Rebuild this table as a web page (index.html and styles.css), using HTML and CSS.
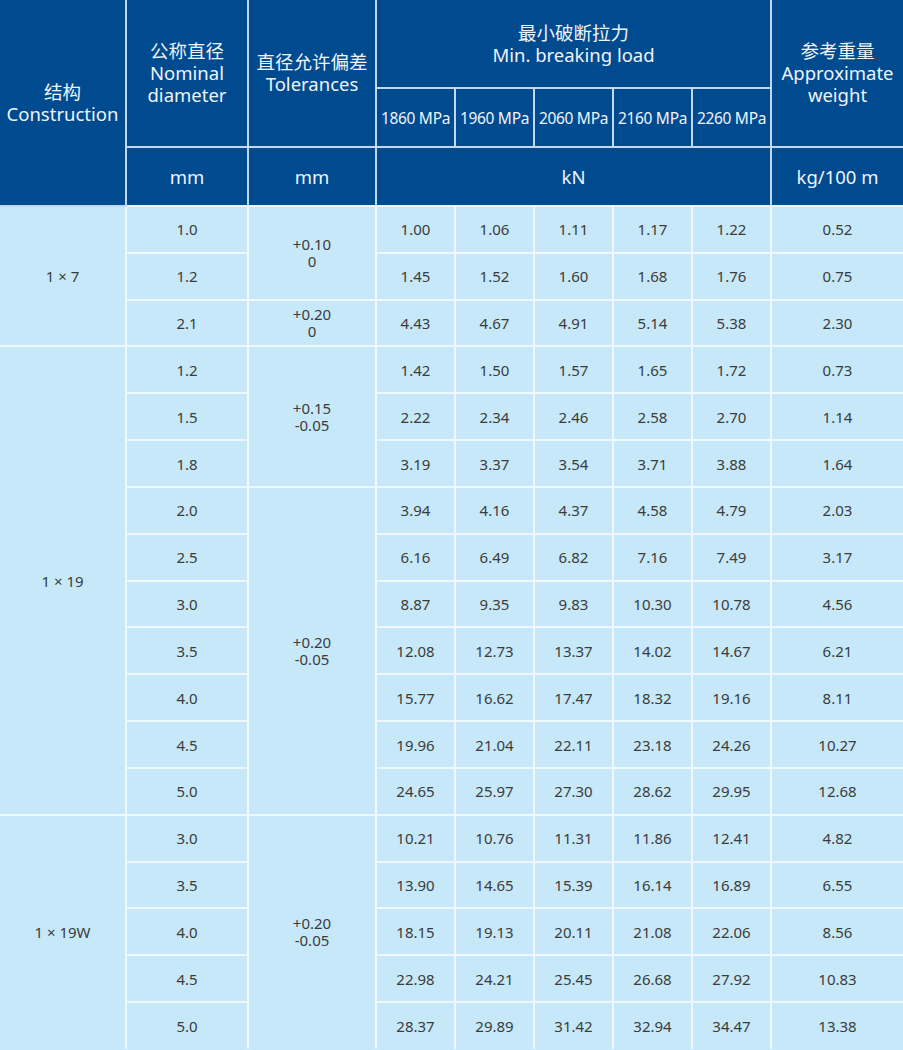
FILE: index.html
```html
<!DOCTYPE html>
<html>
<head>
<meta charset="utf-8">
<link rel="stylesheet" href="styles.css">
</head>
<body>
<table class="spec">
<colgroup>
<col class="c-con"><col class="c-nom"><col class="c-tol">
<col class="c-mpa"><col class="c-mpa"><col class="c-mpa"><col class="c-mpa"><col class="c-mpa">
<col class="c-wt">
</colgroup>
<thead>
<tr class="h1">
<th rowspan="3" class="nob-top nob-left">结构<br>Construction</th>
<th rowspan="2" class="nob-top">公称直径<br>Nominal<br>diameter</th>
<th rowspan="2" class="nob-top">直径允许偏差<br>Tolerances</th>
<th colspan="5" class="nob-top">最小破断拉力<br>Min. breaking load</th>
<th rowspan="2" class="nob-top nob-right">参考重量<br>Approximate<br>weight</th>
</tr>
<tr class="h2">
<th class="mpa">1860 MPa</th><th class="mpa">1960 MPa</th><th class="mpa">2060 MPa</th><th class="mpa">2160 MPa</th><th class="mpa">2260 MPa</th>
</tr>
<tr class="h3">
<th>mm</th><th>mm</th><th colspan="5">kN</th><th class="nob-right">kg/100 m</th>
</tr>
</thead>
<tbody>
<tr><td rowspan="3" class="nob-left">1 × 7</td><td>1.0</td><td rowspan="2" class="tol">+0.10<br>0</td><td>1.00</td><td>1.06</td><td>1.11</td><td>1.17</td><td>1.22</td><td class="nob-right">0.52</td></tr>
<tr><td>1.2</td><td>1.45</td><td>1.52</td><td>1.60</td><td>1.68</td><td>1.76</td><td class="nob-right">0.75</td></tr>
<tr><td>2.1</td><td class="tol">+0.20<br>0</td><td>4.43</td><td>4.67</td><td>4.91</td><td>5.14</td><td>5.38</td><td class="nob-right">2.30</td></tr>

<tr><td rowspan="10" class="nob-left">1 × 19</td><td>1.2</td><td rowspan="3" class="tol">+0.15<br>-0.05</td><td>1.42</td><td>1.50</td><td>1.57</td><td>1.65</td><td>1.72</td><td class="nob-right">0.73</td></tr>
<tr><td>1.5</td><td>2.22</td><td>2.34</td><td>2.46</td><td>2.58</td><td>2.70</td><td class="nob-right">1.14</td></tr>
<tr><td>1.8</td><td>3.19</td><td>3.37</td><td>3.54</td><td>3.71</td><td>3.88</td><td class="nob-right">1.64</td></tr>
<tr><td>2.0</td><td rowspan="7" class="tol">+0.20<br>-0.05</td><td>3.94</td><td>4.16</td><td>4.37</td><td>4.58</td><td>4.79</td><td class="nob-right">2.03</td></tr>
<tr><td>2.5</td><td>6.16</td><td>6.49</td><td>6.82</td><td>7.16</td><td>7.49</td><td class="nob-right">3.17</td></tr>
<tr><td>3.0</td><td>8.87</td><td>9.35</td><td>9.83</td><td>10.30</td><td>10.78</td><td class="nob-right">4.56</td></tr>
<tr><td>3.5</td><td>12.08</td><td>12.73</td><td>13.37</td><td>14.02</td><td>14.67</td><td class="nob-right">6.21</td></tr>
<tr><td>4.0</td><td>15.77</td><td>16.62</td><td>17.47</td><td>18.32</td><td>19.16</td><td class="nob-right">8.11</td></tr>
<tr><td>4.5</td><td>19.96</td><td>21.04</td><td>22.11</td><td>23.18</td><td>24.26</td><td class="nob-right">10.27</td></tr>
<tr><td>5.0</td><td>24.65</td><td>25.97</td><td>27.30</td><td>28.62</td><td>29.95</td><td class="nob-right">12.68</td></tr>

<tr><td rowspan="5" class="nob-left nob-bottom">1 × 19W</td><td>3.0</td><td rowspan="5" class="tol nob-bottom">+0.20<br>-0.05</td><td>10.21</td><td>10.76</td><td>11.31</td><td>11.86</td><td>12.41</td><td class="nob-right">4.82</td></tr>
<tr><td>3.5</td><td>13.90</td><td>14.65</td><td>15.39</td><td>16.14</td><td>16.89</td><td class="nob-right">6.55</td></tr>
<tr><td>4.0</td><td>18.15</td><td>19.13</td><td>20.11</td><td>21.08</td><td>22.06</td><td class="nob-right">8.56</td></tr>
<tr><td>4.5</td><td>22.98</td><td>24.21</td><td>25.45</td><td>26.68</td><td>27.92</td><td class="nob-right">10.83</td></tr>
<tr class="last"><td>5.0</td><td>28.37</td><td>29.89</td><td>31.42</td><td>32.94</td><td>34.47</td><td class="nob-right">13.38</td></tr>
</tbody>
</table>
</body>
</html>
```

FILE: styles.css
```css
html, body {
  margin: 0;
  padding: 0;
  background: #c6e8f8;
}
body {
  width: 903px;
  height: 1050px;
  overflow: hidden;
  font-family: "Noto Sans", "Noto Sans CJK SC", sans-serif;
}
.spec {
  width: 903px;
  table-layout: fixed;
  border-collapse: collapse;
  border-spacing: 0;
}
.c-con { width: 126px; }
.c-nom { width: 122px; }
.c-tol { width: 128px; }
.c-mpa { width: 79px; }
.c-wt { width: 132px; }

th {
  background: #004a8f;
  color: #eef4fa;
  font-weight: 400;
  font-size: 18.5px;
  line-height: 22px;
  text-align: center;
  vertical-align: middle;
  border: 2px solid #c2d8ec;
  padding: 0;
  white-space: nowrap;
}
.h1 { height: 88px; }
.h2 { height: 59px; }
.h3 { height: 59px; }
th.mpa {
  font-size: 15.5px;
  letter-spacing: -0.3px;
}
thead tr.h3 th { border-bottom-color: #e6f4fb; }

td {
  background: #c6e8f8;
  color: #3c3c3c;
  font-size: 15px;
  text-align: center;
  vertical-align: middle;
  border: 2px solid #eef8fd;
  padding: 0;
  height: 44.8px;
  white-space: nowrap;
}
tbody tr { height: 46.83px; }
td.tol { line-height: 17px; }

.nob-top { border-top: none; }
.nob-left { border-left: none; }
.nob-right { border-right: none; }
.nob-bottom { border-bottom: none; }
tr.last td { border-bottom: none; }
```
